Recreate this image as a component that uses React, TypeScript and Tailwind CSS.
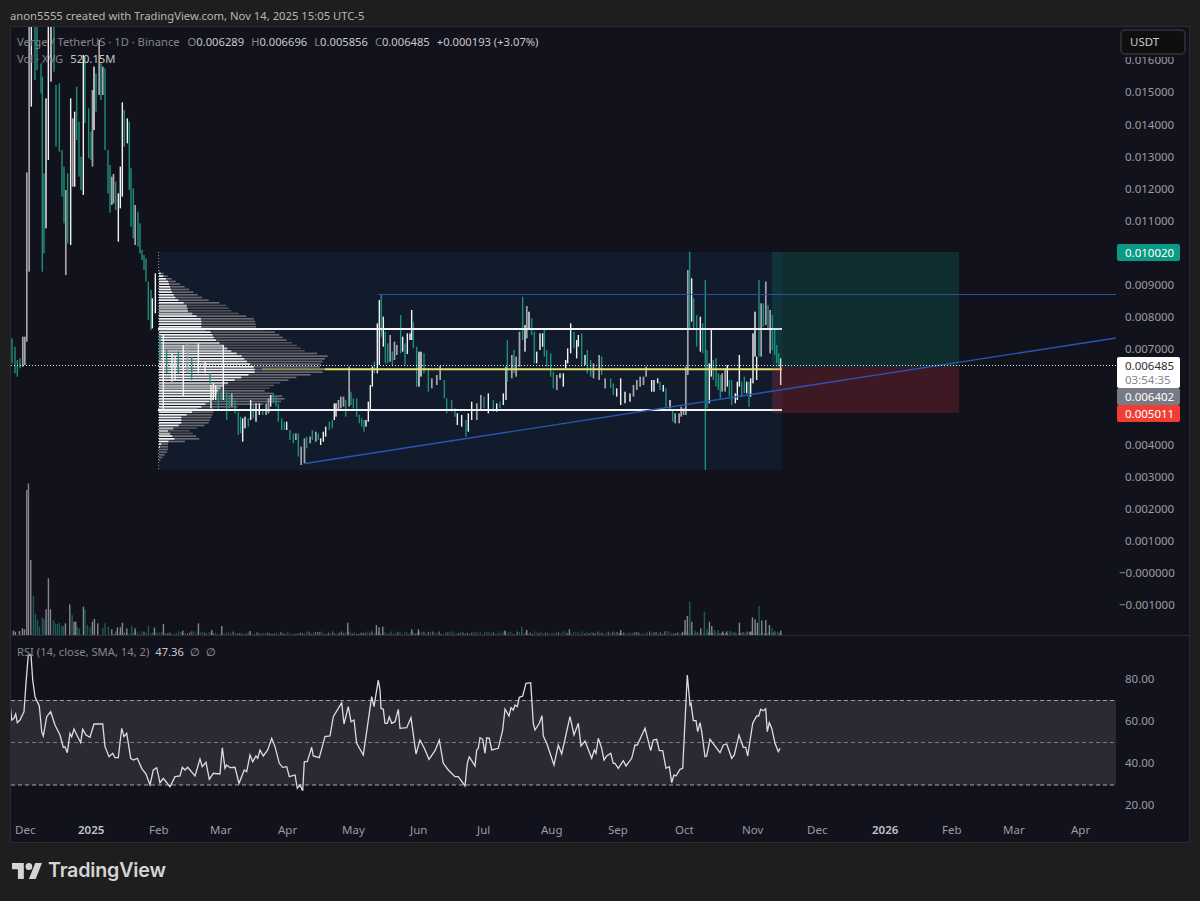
import React from "react";

type Bar = [number, number, number, number];
const TEAL = "#1f8d7c";
const COLORS = [TEAL, "#f2f2f2", "#a3a3a9"];

// bars read off in 3x crops: [x, top, bottom, kind] with kind 0 teal, 1 white, 2 gray
const scale = (ox: number, oy: number, bars: Bar[]): Bar[] =>
  bars.map(([x, a, b, k]) => [ox + x / 3, oy + a / 3, oy + b / 3, k]);

const early: Bar[] = [
  [36, 925, 1000, 0], [45, 950, 1030, 0], [52, 990, 1040, 0], [60, 985, 1015, 0], [68, 920, 1010, 2], [74, 920, 1005, 2],
  [80, 427, 935, 2], [87, -20, 725, 2], [94, -20, 230, 1], [105, -20, 150, 0], [111, -20, 120, 0], [123, 100, 190, 0],
  [127, 140, 725, 0], [132, 430, 670, 0], [138, 205, 595, 1], [145, -20, 390, 1], [153, -20, 155, 1], [162, -20, 125, 0],
  [168, 165, 350, 0], [178, 160, 365, 0], [186, 360, 500, 0], [192, 410, 580, 0], [197, 480, 735, 2], [203, 430, 640, 0],
  [212, 205, 645, 1], [218, 265, 470, 2], [224, 245, 470, 1], [230, 170, 330, 0], [237, 275, 440, 0], [243, 380, 480, 0],
  [250, 75, 495, 1], [255, 80, 280, 0], [266, 235, 385, 0], [273, 305, 390, 0], [277, 180, 410, 2], [282, 110, 300, 1],
  [288, 130, 245, 0], [297, 30, 195, 2], [303, 100, 210, 0], [308, 110, 195, 2], [315, 115, 360, 0], [324, 360, 490, 0],
  [330, 405, 548, 0], [335, 440, 525, 2], [340, 432, 520, 2], [347, 455, 540, 0], [355, 490, 635, 1], [361, 410, 535, 1],
  [367, 217, 500, 1], [373, 240, 350, 0], [382, 265, 340, 1], [388, 275, 480, 0], [393, 415, 590, 0], [400, 475, 625, 0],
  [405, 525, 645, 2], [414, 545, 650, 0], [420, 580, 670, 0], [426, 660, 690, 0], [432, 675, 720, 0], [438, 685, 755, 0],
  [445, 755, 870, 0], [453, 780, 900, 0], [457, 805, 895, 1], [466, 730, 850, 1],
];

const middle: Bar[] = [
  [30, 285, 360, 0], [40, 285, 510, 1], [50, 330, 400, 0], [66, 340, 425, 1], [75, 350, 420, 1], [85, 335, 400, 0],
  [100, 315, 470, 1], [112, 310, 400, 2], [125, 350, 420, 0], [145, 310, 400, 1], [165, 365, 400, 1], [180, 400, 430, 0],
  [183, 435, 505, 1], [190, 430, 480, 1], [197, 435, 480, 1], [205, 450, 510, 0], [213, 455, 480, 0], [220, 315, 480, 1],
  [230, 455, 540, 0], [238, 465, 505, 0], [245, 460, 500, 2], [255, 480, 520, 0], [265, 515, 585, 0], [272, 530, 580, 0],
  [278, 535, 605, 1], [285, 530, 565, 1], [295, 535, 560, 0], [302, 480, 540, 1], [310, 495, 535, 0], [318, 490, 545, 1],
  [328, 490, 525, 1], [338, 510, 525, 0], [348, 490, 525, 2], [355, 475, 520, 2], [362, 465, 500, 1], [370, 460, 490, 0],
  [378, 470, 500, 0], [385, 490, 545, 0], [395, 535, 570, 0], [403, 545, 570, 0], [410, 545, 570, 1], [420, 570, 600, 0],
  [430, 580, 610, 0], [437, 580, 600, 2], [445, 580, 650, 0], [453, 620, 675, 2], [463, 595, 670, 2], [470, 590, 625, 0],
  [480, 590, 610, 2], [487, 570, 600, 0], [497, 575, 605, 2], [505, 580, 600, 0], [512, 595, 615, 1], [520, 575, 605, 1],
  [527, 560, 590, 1], [538, 545, 570, 0], [547, 540, 565, 0], [553, 490, 540, 1], [558, 490, 530, 1], [565, 480, 510, 2],
  [572, 470, 505, 2], [580, 470, 500, 2], [587, 480, 530, 0], [597, 380, 500, 2], [603, 455, 495, 0], [610, 475, 505, 0],
  [620, 475, 530, 0], [628, 525, 550, 0], [635, 535, 560, 0], [642, 540, 575, 0], [648, 540, 560, 1], [655, 485, 545, 1],
  [661, 435, 510, 1], [667, 380, 440, 1], [673, 365, 400, 0], [682, 250, 400, 1], [688, 180, 375, 1], [694, 165, 290, 0],
  [700, 230, 320, 1], [706, 275, 370, 0], [713, 310, 370, 0], [720, 285, 365, 2], [727, 335, 375, 0], [733, 305, 360, 2],
  [740, 315, 345, 2],
];

const late: Bar[] = [
  [2, 105, 220, 0], [8, 170, 215, 1], [15, 190, 255, 0], [22, 160, 222, 1], [30, 160, 180, 1], [35, 90, 180, 1],
  [40, 125, 205, 0], [50, 200, 320, 0], [57, 215, 320, 1], [63, 215, 290, 1], [72, 220, 280, 0], [85, 265, 335, 0],
  [95, 295, 325, 2], [110, 285, 315, 2], [120, 258, 300, 2], [133, 300, 355, 0], [140, 355, 400, 0], [155, 360, 395, 0],
  [165, 385, 410, 0], [172, 400, 435, 1], [185, 405, 440, 1], [198, 420, 470, 0], [205, 400, 455, 1], [215, 365, 420, 1],
  [230, 370, 420, 2], [242, 345, 390, 2], [252, 350, 385, 0], [265, 340, 400, 1], [280, 360, 395, 0], [290, 370, 395, 1],
  [300, 365, 385, 0], [310, 340, 375, 1], [318, 260, 360, 1], [322, 180, 305, 0], [335, 225, 295, 2], [342, 210, 280, 0],
  [348, 230, 290, 2], [358, 155, 260, 2], [368, 50, 180, 0], [375, 135, 215, 1], [380, 78, 175, 2], [387, 95, 150, 1],
  [395, 115, 165, 0], [403, 155, 250, 0], [410, 215, 250, 1], [420, 160, 210, 1], [428, 160, 200, 1], [433, 150, 230, 0],
  [440, 210, 260, 0], [452, 220, 290, 0], [460, 275, 325, 0], [470, 285, 330, 2], [480, 280, 295, 1], [490, 280, 320, 1],
  [497, 240, 265, 1], [503, 205, 250, 1], [512, 130, 220, 1], [522, 155, 205, 0], [530, 180, 235, 1], [535, 165, 200, 1],
  [545, 160, 260, 0], [555, 225, 255, 1], [562, 210, 280, 0], [572, 240, 290, 0], [580, 250, 295, 2], [597, 225, 300, 2],
  [605, 230, 285, 0], [615, 295, 325, 2], [632, 295, 325, 0], [640, 310, 345, 0], [650, 325, 350, 1], [662, 295, 375, 1],
  [675, 335, 370, 1], [690, 340, 365, 1], [700, 315, 350, 2], [710, 300, 330, 2], [720, 290, 320, 2], [730, 290, 315, 2],
  [738, 260, 290, 2],
];

const recent: Bar[] = [
  [5, 420, 455, 1], [12, 420, 455, 1], [23, 415, 430, 1], [30, 425, 450, 0], [40, 435, 455, 1], [48, 445, 500, 0],
  [60, 480, 505, 1], [68, 510, 545, 0], [75, 520, 550, 2], [87, 520, 550, 2], [93, 500, 530, 2], [100, 505, 525, 2],
  [107, 380, 525, 2], [113, 90, 405, 2], [119, 35, 265, 0], [125, 115, 245, 1], [131, 175, 265, 0], [140, 225, 320, 0],
  [151, 230, 335, 1], [158, 250, 340, 0], [166, 120, 690, 0], [171, 330, 505, 0], [178, 370, 490, 1], [184, 270, 410, 1],
  [190, 360, 420, 0], [198, 355, 440, 0], [205, 400, 450, 0], [211, 405, 475, 0], [216, 400, 455, 2], [225, 385, 455, 2],
  [232, 375, 440, 1], [238, 420, 470, 0], [245, 420, 495, 0], [256, 460, 490, 1], [262, 425, 480, 1], [268, 345, 440, 1],
  [275, 425, 470, 0], [283, 410, 460, 0], [290, 425, 460, 1], [297, 425, 500, 0], [302, 415, 470, 1], [309, 280, 430, 1],
  [315, 215, 350, 1], [320, 350, 420, 1], [327, 120, 350, 0], [333, 190, 350, 2], [340, 190, 260, 0], [347, 125, 255, 2],
  [354, 195, 265, 0], [360, 210, 340, 2], [367, 225, 330, 0], [374, 265, 345, 0], [380, 315, 370, 0], [386, 340, 380, 0],
  [392, 355, 435, 1],
];

const candles: Bar[] = [
  ...scale(0, 30, early),
  ...scale(150, 240, middle),
  ...scale(400, 280, late),
  ...scale(650, 240, recent),
];

// zoom y, outer end, inner end (volume profile)
const profile = [
  [90, 35, 30], [120, 80, 60], [150, 130, 70], [175, 170, 85], [190, 230, 115], [210, 250, 120], [235, 320, 160],
  [260, 325, 160], [275, 385, 190], [295, 410, 200], [310, 440, 220], [330, 470, 250], [345, 540, 280], [365, 520, 300],
  [380, 515, 320], [395, 525, 320], [410, 445, 280], [430, 385, 230], [450, 350, 210], [470, 415, 200], [485, 395, 180],
  [505, 200, 150], [530, 190, 100], [550, 180, 100], [570, 125, 60], [595, 155, 80], [610, 60, 40], [630, 60, 30], [660, 35, 30],
];

const inGrayBand = (zy: number) =>
  (zy >= 190 && zy <= 222) || (zy >= 305 && zy <= 330) || (zy >= 420 && zy <= 445) || (zy >= 560 && zy <= 580);

const profileRows = () => {
  const rows: { y: number; outer: number; inner: number; gray: boolean }[] = [];
  for (let zy = 90; zy <= 662; zy += 8) {
    const i = profile.findIndex((p) => p[0] >= zy);
    const b = profile[Math.max(i, 0)];
    const a = profile[Math.max(i - 1, 0)];
    const t = b[0] === a[0] ? 0 : (zy - a[0]) / (b[0] - a[0]);
    const wobble = zy % 16 === 0 ? 0 : -6;
    rows.push({
      y: 240 + zy / 3,
      outer: 150 + (a[1] + (b[1] - a[1]) * t + wobble) / 3,
      inner: 150 + (a[2] + (b[2] - a[2]) * t + wobble) / 3,
      gray: inGrayBand(zy),
    });
  }
  return rows;
};

const rnd = (i: number) => {
  const v = Math.sin(i * 12.9898) * 43758.5453;
  return v - Math.floor(v);
};

const volPeaks: Bar[] = [
  [40, 482, 497, 2], [46, 485, 497, 2], [58, 483, 497, 2], [67, 475, 497, 2], [73, 478, 497, 2], [80, 60, 497, 2], [85, 40, 497, 2],
  [92, 270, 497, 2], [100, 378, 497, 0], [106, 432, 497, 0], [112, 450, 497, 0], [118, 470, 497, 0], [127, 442, 497, 0],
  [132, 448, 497, 0], [138, 418, 497, 2], [145, 325, 497, 2], [151, 418, 497, 2], [160, 450, 497, 0], [166, 460, 497, 0],
  [172, 462, 497, 0], [178, 458, 497, 0], [185, 468, 497, 0], [190, 468, 497, 0], [196, 460, 497, 2], [209, 403, 497, 2],
  [216, 435, 497, 0], [222, 455, 497, 2], [227, 455, 497, 2], [232, 470, 497, 0], [238, 475, 497, 0], [250, 410, 497, 2],
  [255, 418, 497, 0], [262, 465, 497, 0], [270, 472, 497, 0], [277, 455, 497, 2], [283, 447, 497, 2], [293, 460, 497, 2],
  [308, 475, 497, 0], [315, 460, 497, 0], [325, 470, 497, 0], [335, 478, 497, 2], [352, 472, 497, 2], [361, 472, 497, 2],
  [367, 458, 497, 2], [380, 475, 497, 2], [395, 468, 497, 0], [405, 475, 497, 2], [445, 468, 497, 0], [463, 473, 497, 2],
  [490, 462, 497, 2], [548, 482, 497, 2], [595, 460, 497, 2], [635, 480, 497, 2], [665, 468, 497, 2], [750, 483, 497, 2],
];

const volRecent: Bar[] = [
  [143, 98, 137, 2], [229, 105, 137, 2], [237, 112, 137, 2], [248, 110, 137, 2], [335, 118, 137, 2], [355, 118, 137, 2],
  [615, 122, 137, 2], [665, 110, 137, 0], [680, 120, 137, 2], [808, 118, 137, 2], [893, 124, 137, 0], [962, 120, 137, 2],
  [1147, 128, 137, 2], [1155, 90, 137, 2], [1162, 78, 137, 2], [1169, 35, 137, 0], [1175, 95, 137, 2], [1185, 122, 137, 0],
  [1202, 115, 137, 2], [1213, 65, 137, 0], [1221, 118, 137, 0], [1228, 95, 137, 2], [1235, 108, 137, 2], [1243, 120, 137, 0],
  [1254, 120, 137, 0], [1268, 124, 137, 2], [1280, 124, 137, 2], [1290, 122, 137, 0], [1305, 128, 137, 0], [1318, 98, 137, 2],
  [1340, 128, 137, 0], [1352, 124, 137, 2], [1357, 82, 137, 2], [1365, 88, 137, 2], [1372, 98, 137, 2], [1377, 48, 137, 0],
  [1385, 92, 137, 2], [1397, 90, 137, 2], [1408, 105, 137, 2], [1416, 115, 137, 0], [1424, 122, 137, 0], [1433, 125, 137, 0], [1442, 122, 137, 2],
];

const volumes: Bar[] = [...scale(0, 470, volPeaks), ...scale(300, 590, volRecent)];

const rsiA = [
  [30, 250], [35, 300], [42, 295], [47, 282], [52, 308], [60, 300], [72, 275], [78, 190], [85, 105], [93, 105], [98, 180], [105, 230],
  [118, 258], [125, 335], [130, 348], [140, 290], [152, 275], [165, 315], [180, 345], [190, 382], [195, 380], [202, 398], [210, 340],
  [215, 350], [222, 327], [233, 350], [242, 368], [248, 328], [258, 345], [270, 352], [282, 312], [300, 312], [308, 312], [315, 380],
  [327, 410], [338, 400], [345, 413], [355, 413], [365, 325], [372, 350], [380, 340], [392, 415], [400, 420], [412, 415], [425, 445],
  [438, 462], [450, 495], [460, 450], [470, 443], [480, 488], [490, 475], [510, 500], [525, 470], [540, 468], [547, 442], [555, 450],
  [563, 442], [585, 468], [600, 417], [607, 440], [618, 427], [628, 478], [640, 460], [660, 462], [667, 383], [675, 445], [680, 435],
  [690, 443], [705, 442], [717, 490], [733, 450], [740, 455], [750, 405], [758, 425], [768, 408], [773, 415], [780, 390], [790, 408],
  [803, 390], [815, 355], [825, 380], [838, 430], [848, 442], [860, 440], [868, 470], [885, 465], [892, 505], [900, 495], [908, 512],
  [913, 425], [922, 425], [935, 382], [940, 408], [958, 413], [975, 350], [990, 348], [1000, 290], [1025, 248], [1032, 312], [1045, 260],
  [1053, 305], [1062, 300], [1070, 370], [1090, 405], [1115, 230], [1122, 260], [1135, 180],
];
const rsiB = [
  [0, 90], [3, 145], [10, 148], [15, 190], [22, 190], [28, 170], [35, 190], [45, 185], [55, 148], [60, 205], [80, 203], [93, 173], [108, 282],
  [120, 240], [133, 265], [147, 298], [165, 272], [178, 240], [190, 310], [205, 330], [225, 350], [235, 350], [255, 378], [262, 310], [268, 290],
  [285, 318], [290, 270], [295, 265], [300, 233], [308, 238], [315, 280], [320, 233], [328, 235], [335, 270], [355, 265], [368, 210], [375, 147],
  [387, 168], [393, 143], [400, 150], [405, 135], [412, 140], [418, 112], [428, 108], [438, 70], [452, 68], [460, 190], [465, 210], [478, 190],
  [486, 167], [490, 228], [500, 250], [522, 315], [535, 255], [545, 282], [570, 170], [582, 225], [595, 190], [603, 258], [615, 243], [635, 295],
  [643, 270], [648, 280], [655, 235], [665, 265], [672, 300], [680, 288], [692, 280], [700, 310], [705, 310], [715, 325], [730, 302], [738, 318],
  [755, 295], [765, 255], [772, 255], [795, 205], [812, 272], [820, 240], [830, 238], [838, 272], [848, 272], [858, 325], [868, 320], [875, 368],
  [882, 345], [888, 348], [900, 328], [908, 325], [922, 45], [930, 135], [933, 130], [940, 182], [948, 182], [953, 215], [960, 188], [965, 215],
  [975, 290], [980, 288], [990, 238], [1020, 278], [1030, 255], [1040, 252], [1055, 295], [1063, 285], [1077, 225], [1090, 262], [1097, 262],
  [1103, 288], [1118, 190], [1130, 168], [1136, 168], [1142, 148], [1150, 152], [1157, 146], [1162, 215], [1168, 188], [1175, 205], [1185, 250],
  [1195, 275], [1200, 265],
];
const rsiPoints = [
  ...rsiA.map(([x, y]) => `${(x / 3).toFixed(1)},${(620 + y / 3).toFixed(1)}`),
  ...rsiB.map(([x, y]) => `${(380 + x / 3).toFixed(1)},${(660 + y / 3).toFixed(1)}`),
].join(" ");

// the 0.010, 0.006 and 0.005 ticks sit under the price badges
const prices = [
  "0.016000", "0.015000", "0.014000", "0.013000", "0.012000", "0.011000", "", "0.009000", "0.008000",
  "0.007000", "", "", "0.004000", "0.003000", "0.002000", "0.001000", "−0.000000", "−0.001000",
];

const months = [
  { label: "Dec", cls: "w-[63px]" },
  { label: "2025", cls: "w-[71px] font-semibold text-[#c4c4c8]" },
  { label: "Feb", cls: "w-[61px]" },
  { label: "Mar", cls: "w-[68px]" },
  { label: "Apr", cls: "w-[64px]" },
  { label: "May", cls: "w-[68px]" },
  { label: "Jun", cls: "w-[67px]" },
  { label: "Jul", cls: "w-[64px]" },
  { label: "Aug", cls: "w-[67px]" },
  { label: "Sep", cls: "w-[67px]" },
  { label: "Oct", cls: "w-[67px]" },
  { label: "Nov", cls: "w-[65px]" },
  { label: "Dec", cls: "w-[65px]" },
  { label: "2026", cls: "w-[70px] font-semibold text-[#c4c4c8]" },
  { label: "Feb", cls: "w-[61px]" },
  { label: "Mar", cls: "w-[68px]" },
  { label: "Apr", cls: "w-[40px]" },
];

const MainChart = () => (
  <svg className="block w-full h-full" viewBox="11 27 1105 608">
    <rect x="158" y="252" width="624" height="218" fill="#2196f3" opacity="0.07" />
    <line x1="158.5" y1="252" x2="158.5" y2="470" stroke="#8a8a90" strokeWidth="1" strokeDasharray="1 2" />
    {profileRows().map((r) => (
      <g key={r.y}>
        <rect x="159" y={r.y} width={Math.max(r.outer - 159, 0)} height="1.6" fill={r.gray ? "#4f4f55" : "#6b6b71"} />
        <rect
          x="159"
          y={r.y}
          width={Math.max(r.inner - 159, 0)}
          height={r.gray ? 2.2 : 1.6}
          fill={r.gray ? "#b4b4b8" : "#f4f4f4"}
        />
      </g>
    ))}
    {candles.map(([x, a, b, k], i) => (
      <rect key={i} x={x - 0.7} y={a} width={k === 2 ? 1.7 : 1.4} height={b - a} fill={COLORS[k]} />
    ))}
    {Array.from({ length: 308 }, (_, i) => {
      const x = 113 + i * 2.17;
      const h = 1 + rnd(i) * 2.8;
      return <rect key={i} x={x} y={635 - h} width="1.3" height={h} fill={rnd(i + 900) > 0.45 ? "#1d4f4c" : "#66666e"} />;
    })}
    {volumes.map(([x, a, b, k], i) => (
      <rect key={i} x={x - 0.6} y={a} width="1.4" height={b - a} fill={k === 0 ? "#1f5a55" : "#85858d"} />
    ))}
    <line x1="158" y1="329" x2="782" y2="329" stroke="#f5f5f5" strokeWidth="2" />
    <line x1="158" y1="410" x2="782" y2="410" stroke="#f5f5f5" strokeWidth="2" />
    <line x1="262" y1="369.3" x2="325" y2="369.3" stroke="#8f8c58" strokeWidth="2" />
    <line x1="325" y1="369.3" x2="782" y2="369.3" stroke="#e8e36c" strokeWidth="2" />
    <rect x="772" y="252" width="187" height="115" fill="#089981" opacity="0.2" />
    <rect x="772" y="367" width="187" height="46" fill="#f23645" opacity="0.2" />
    <line x1="378" y1="294.5" x2="1116" y2="294.5" stroke="#2552b0" strokeWidth="1.2" />
    <line x1="305" y1="463.5" x2="1116" y2="338" stroke="#2b55b4" strokeWidth="1.4" />
    <line x1="11" y1="365.5" x2="1116" y2="365.5" stroke="#e8e8e8" strokeWidth="1" strokeDasharray="1 2" />
  </svg>
);

const RsiChart = () => (
  <svg className="block w-full h-full" viewBox="11 636 1105 184">
    <rect x="11" y="700" width="1105" height="85" fill="#2a2a34" />
    <line x1="11" y1="700.5" x2="1116" y2="700.5" stroke="#9a9aa0" strokeWidth="1" strokeDasharray="4 3" />
    <line x1="11" y1="742.5" x2="1116" y2="742.5" stroke="#77777d" strokeWidth="1" strokeDasharray="4 3" />
    <line x1="11" y1="785" x2="1116" y2="785" stroke="#a5a5aa" strokeWidth="1" strokeDasharray="4 3" />
    <polyline points={rsiPoints} fill="none" stroke="#dcdce0" strokeWidth="1.3" />
  </svg>
);

export default function App() {
  return (
    <div className="w-[1200px] h-[901px] flex flex-col overflow-hidden bg-[#1e1e1e] font-['Noto_Sans',sans-serif] text-[#9b9ba1]">
      <div className="h-[26px] shrink-0 pl-[10px] pt-[8px] text-[11.25px] leading-[16px] text-[#b6b6b8]">
        anon5555 created with TradingView.com, Nov 14, 2025 15:05 UTC-5
      </div>

      <div className="mx-[10px] h-[817px] shrink-0 flex flex-col border border-[#2c2c30] bg-[#12121c]">
        <div className="h-[608px] shrink-0 flex relative">
          <div className="flex-1 min-w-0">
            <MainChart />
          </div>
          <div className="w-[73px] shrink-0 pl-[9px] pt-[17px] overflow-hidden text-[11.5px]">
            {prices.map((p, i) => (
              <div key={i} className={p.startsWith("−") ? "h-[32.07px] flex items-center -ml-[6px]" : "h-[32.07px] flex items-center"}>
                {p}
              </div>
            ))}
          </div>

          <div className="absolute left-[6px] top-[6px] text-[11.2px] leading-[17px]">
            <div className="flex gap-[7px] text-[#85858b]">
              <span>Verge / TetherUS · 1D · Binance</span>
              <span className="ml-[1px]">O<span className="text-[#c8c8cc]">0.006289</span></span>
              <span>H<span className="text-[#c8c8cc]">0.006696</span></span>
              <span>L<span className="text-[#c8c8cc]">0.005856</span></span>
              <span>C<span className="text-[#c8c8cc]">0.006485</span></span>
              <span className="text-[#c8c8cc]">+0.000193 (+3.07%)</span>
            </div>
            <div className="flex gap-[7px] text-[#85858b]">
              <span>Vol · XVG</span>
              <span className="text-[#c8c8cc]">520.15M</span>
            </div>
          </div>

          <div className="absolute right-[3px] top-[2px] w-[66px] h-[26px] flex items-center pl-[8px] rounded-[5px] border-2 border-[#2a2a30] bg-[#0f0f0f] shadow-[0_0_0_2px_#12121c] text-[11.5px] text-[#c8c8cc]">
            USDT
          </div>

          <div className="absolute left-[1106px] top-[217px] w-[63px] h-[17px] flex items-center pl-[8px] rounded-[2px] bg-[#0a9a85] text-[11.5px] text-white">
            0.010020
          </div>
          <div className="absolute left-[1106px] top-[330px] w-[63px] h-[31px] pl-[8px] rounded-[2px] bg-white text-[11.5px] leading-[14px] pt-[2px] text-[#2e2e33]">
            0.006485
            <div className="text-[#85858b]">03:54:35</div>
          </div>
          <div className="absolute left-[1106px] top-[361px] w-[63px] h-[17px] flex items-center pl-[8px] rounded-[2px] bg-[#787b86] text-[11.5px] text-white">
            0.006402
          </div>
          <div className="absolute left-[1106px] top-[378px] w-[63px] h-[17px] flex items-center pl-[8px] rounded-[2px] bg-[#f23d35] text-[11.5px] text-white">
            0.005011
          </div>
        </div>

        <div className="h-px shrink-0 bg-[#2c2c34]" />

        <div className="h-[184px] shrink-0 flex relative">
          <div className="flex-1 min-w-0">
            <RsiChart />
          </div>
          <div className="w-[73px] shrink-0 pl-[9px] pt-[21px] text-[11.5px]">
            {["80.00", "60.00", "40.00", "20.00"].map((v) => (
              <div key={v} className="h-[42.3px] flex items-center">{v}</div>
            ))}
          </div>
          <div className="absolute left-[6px] top-[7px] flex gap-[6px] text-[11.2px] leading-[17px] text-[#85858b]">
            <span>RSI (14, close, SMA, 14, 2)</span>
            <span className="text-[#c8c8cc]">47.36</span>
            <span className="text-[#a5a5aa]">∅</span>
            <span className="text-[#a5a5aa]">∅</span>
          </div>
        </div>

        <div className="flex-1 flex items-center pl-[4px] pb-[3px] text-[11.5px]">
          {months.map((m, i) => (
            <div key={i} className={`${m.cls} shrink-0`}>{m.label}</div>
          ))}
        </div>
      </div>

      <div className="flex-1 flex items-center gap-[6px] pl-[12px] pb-[2px] text-[#d4d4d6]">
        <svg width="30" height="16" viewBox="0 4 35.5 18" preserveAspectRatio="none" fill="currentColor">
          <path d="M14 22H7V11H0V4h14v18zM28 22h-8l7.5-18h8L28 22z" />
          <circle cx="20" cy="8" r="4" />
        </svg>
        <span className="text-[19.7px] leading-none font-semibold tracking-[-0.2px] font-['Inter',sans-serif]">TradingView</span>
      </div>
    </div>
  );
}
